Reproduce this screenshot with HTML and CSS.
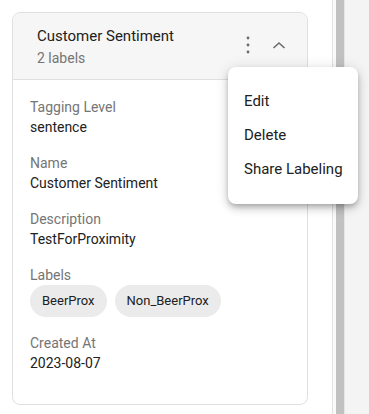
FILE: index.html
```html
<!DOCTYPE html>
<html lang="en">
<head>
  <meta charset="UTF-8" />
  <meta name="viewport" content="width=device-width, initial-scale=1.0"/>
  <title>Labeling</title>
  <link rel="stylesheet" href="styles.css">
</head>
<body>
  <div class="page">
    <div class="list">
      <div class="card">
        <div class="card-head">
          <div class="head-text">
            <div class="title">Customer Sentiment</div>
            <div class="subtitle">2 labels</div>
          </div>
          <div class="actions">
            <span class="icon-btn">
              <svg width="24" height="24" viewBox="0 0 24 24"><circle cx="12" cy="5" r="1.4" fill="#6b6b6b"/><circle cx="12" cy="12" r="1.4" fill="#6b6b6b"/><circle cx="12" cy="19" r="1.4" fill="#6b6b6b"/></svg>
            </span>
            <span class="icon-btn">
              <svg width="24" height="24" viewBox="0 0 24 24"><path d="M6.5 15 L12 10 L17.5 15" fill="none" stroke="#6b6b6b" stroke-width="1.6"/></svg>
            </span>
          </div>
        </div>
        <div class="card-body">
          <div class="field">
            <div class="label">Tagging Level</div>
            <div class="value">sentence</div>
          </div>
          <div class="field">
            <div class="label">Name</div>
            <div class="value">Customer Sentiment</div>
          </div>
          <div class="field">
            <div class="label">Description</div>
            <div class="value">TestForProximity</div>
          </div>
          <div class="field">
            <div class="label">Labels</div>
            <div class="chips">
              <span class="chip">BeerProx</span>
              <span class="chip">Non_BeerProx</span>
            </div>
          </div>
          <div class="field">
            <div class="label">Created At</div>
            <div class="value">2023-08-07</div>
          </div>
        </div>
      </div>
    </div>
    <div class="gap"></div>
    <div class="scrollbar"></div>
    <div class="side"></div>
  </div>

  <div class="menu">
    <div class="menu-item">Edit</div>
    <div class="menu-item">Delete</div>
    <div class="menu-item">Share Labeling</div>
  </div>
</body>
</html>
```

FILE: styles.css
```css
html, body {
  margin: 0;
  padding: 0;
}
body {
  font-family: Roboto, "Noto Sans", sans-serif;
  background: #fff;
  color: #212121;
  width: 369px;
  height: 414px;
  overflow: hidden;
}
.page {
  display: flex;
  height: 414px;
}
.list {
  width: 296px;
  padding: 12px 24px 0 12px;
  border-right: 1px solid #e2e2e2;
}
.gap {
  width: 3px;
  background: #fafafa;
}
.scrollbar {
  width: 8px;
  background: #c1c1c1;
  border-right: 1px solid #e6e6e6;
}
.side {
  flex: 1;
  background: #f4f4f4;
}
.card {
  border: 1px solid #e0e0e0;
  border-radius: 8px;
  overflow: hidden;
  height: 393px;
  box-sizing: border-box;
}
.card-head {
  display: flex;
  align-items: center;
  background: #f6f6f6;
  border-bottom: 1px solid #e0e0e0;
  padding: 11px 16px 11px 24px;
}
.head-text { flex: 1; }
.title {
  font-size: 15px;
  line-height: 24px;
  color: #212121;
}
.subtitle {
  font-size: 14px;
  line-height: 20px;
  color: #757575;
}
.actions {
  display: flex;
  gap: 7px;
  margin-top: -2px;
}
.icon-btn {
  width: 24px;
  height: 24px;
  display: block;
}
.icon-btn svg { display: block; }
.card-body {
  padding: 17px 17px 0 17px;
}
.field { margin-bottom: 16px; }
.label {
  font-size: 14px;
  line-height: 20px;
  color: #757575;
}
.value {
  font-size: 14px;
  line-height: 20px;
  color: #212121;
}
.chips {
  display: flex;
  gap: 8px;
}
.chip {
  background: #ebebeb;
  border-radius: 16px;
  height: 32px;
  line-height: 32px;
  padding: 0 12px;
  font-size: 13px;
  color: #212121;
}
.menu {
  position: absolute;
  left: 228px;
  top: 67px;
  width: 130px;
  padding: 17px 0 18px;
  background: #fff;
  border-radius: 8px;
  box-shadow: 0 3px 5px -1px rgba(0,0,0,0.2), 0 5px 8px 0 rgba(0,0,0,0.14), 0 1px 14px 0 rgba(0,0,0,0.12);
}
.menu-item {
  height: 34px;
  line-height: 34px;
  padding: 0 16px;
  font-size: 15px;
  white-space: nowrap;
  color: #212121;
}
```
